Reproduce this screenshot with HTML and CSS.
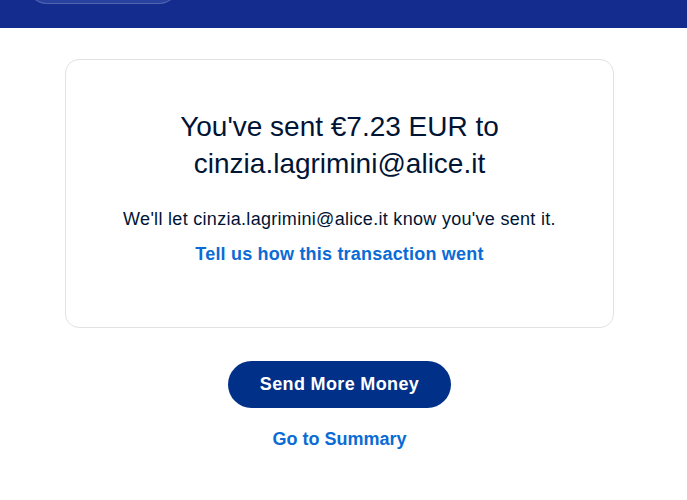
FILE: index.html
```html
<!DOCTYPE html>
<html lang="en">
<head>
<meta charset="utf-8">
<title>Payment sent</title>
<link rel="stylesheet" href="styles.css">
</head>
<body>
<header class="topbar">
  <div class="search-pill"></div>
</header>
<main class="main">
  <section class="card">
    <h1 class="headline">You've sent €7.23 EUR to<br>cinzia.lagrimini@alice.it</h1>
    <p class="note">We'll let cinzia.lagrimini@alice.it know you've sent it.</p>
    <a class="link feedback" href="#">Tell us how this transaction went</a>
  </section>
  <div class="actions">
    <a class="btn-primary" href="#">Send More Money</a>
    <a class="link summary" href="#">Go to Summary</a>
  </div>
</main>
</body>
</html>
```
FILE: styles.css
```css
* { box-sizing: border-box; }
html, body { margin: 0; padding: 0; background: #fff; }
body {
  font-family: "Liberation Sans", Arial, sans-serif;
  color: #001435;
  width: 687px;
  height: 500px;
  overflow: hidden;
}
.topbar {
  height: 28px;
  background: #142c8e;
  overflow: hidden;
  display: flex;
  align-items: flex-start;
  padding-left: 27px;
}
.search-pill {
  width: 152px;
  height: 40px;
  margin-top: -36px;
  border-radius: 20px;
  background: #2a429f;
  border: 1px solid rgba(255,255,255,0.18);
}
.main {
  width: 679px;
  padding-top: 31px;
  display: flex;
  flex-direction: column;
  align-items: center;
}
.card {
  width: 549px;
  height: 269px;
  border: 1px solid #e2e2e2;
  border-radius: 14px;
  display: flex;
  flex-direction: column;
  align-items: center;
  padding-top: 48px;
  text-align: center;
}
.headline {
  margin: 0;
  font-weight: 400;
  font-size: 28px;
  line-height: 37px;
  color: #001435;
}
.note {
  margin: 26px 0 0;
  font-size: 18px;
  line-height: 22px;
  letter-spacing: 0.3px;
}
.link {
  color: #0a6bd6;
  font-weight: 700;
  text-decoration: none;
  font-size: 18px;
  line-height: 22px;
}
.feedback { margin-top: 13px; letter-spacing: 0.2px; }
.actions {
  display: flex;
  flex-direction: column;
  align-items: center;
  margin-top: 33px;
}
.btn-primary {
  width: 223px;
  height: 47px;
  border-radius: 24px;
  background: #003087;
  color: #fff;
  font-weight: 700;
  font-size: 18px;
  letter-spacing: 0.35px;
  display: flex;
  align-items: center;
  justify-content: center;
  text-decoration: none;
}
.summary {
  margin-top: 20px;
}
```
